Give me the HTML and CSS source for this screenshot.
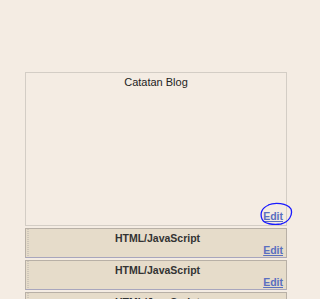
FILE: index.html
```html
<!DOCTYPE html>
<html lang="id">
<head>
  <meta charset="UTF-8" />
  <title>Tata Letak</title>
  <link rel="stylesheet" href="styles.css">
</head>
<body>

<div class="layout">
  <!-- Main posts area -->
  <div class="main-box">
    <div class="box-title">Catatan Blog</div>
    <div class="edit-wrap">
      <a href="#" class="edit-link">Edit</a>
      <svg class="circle-mark" width="34" height="24" viewBox="0 0 34 24">
        <path d="M9 3 C16 0 28 1 32 7 C34 13 30 20 22 22 C14 23 5 22 3 17 C1 12 2 6 10 3" fill="none" stroke="#1a1aff" stroke-width="1.3"/>
      </svg>
    </div>
  </div>

  <!-- Page elements -->
  <div class="widget">
    <div class="widget-title">HTML/JavaScript</div>
    <a href="#" class="edit-link">Edit</a>
  </div>
  <div class="widget">
    <div class="widget-title">HTML/JavaScript</div>
    <a href="#" class="edit-link">Edit</a>
  </div>
  <div class="widget">
    <div class="widget-title">HTML/JavaScript</div>
    <a href="#" class="edit-link">Edit</a>
  </div>
</div>

</body>
</html>
```

FILE: styles.css
```css
body {
  margin: 0;
  background-color: #f4ece3;
  font-family: "Liberation Sans", Arial, sans-serif;
  overflow: hidden;
}

.layout {
  padding: 72px 0 0 25px;
  width: 262px;
}

.main-box {
  height: 152px;
  border: 1px solid #d3cdc5;
  display: flex;
  flex-direction: column;
  justify-content: space-between;
}

.box-title {
  font-size: 11px;
  color: #222;
  text-align: center;
  padding-top: 3px;
}

.edit-wrap {
  position: relative;
  align-self: flex-end;
  margin: 0 3px 2px 0;
  line-height: 13px;
}

.edit-link {
  font-size: 10.5px;
  font-weight: bold;
  color: #5a6fc0;
  text-decoration: underline;
}

.circle-mark {
  position: absolute;
  left: -4px;
  top: -6px;
}

.widget {
  height: 27px;
  margin-top: 2px;
  background-color: #e6dcca;
  border: 1px solid #b8b0a6;
  border-bottom-color: #a8a6bd;
  display: flex;
  flex-direction: column;
  padding: 1px 3px 0 6px;
  background-image: repeating-linear-gradient(#cfc7bb 0 1px, transparent 1px 2px);
  background-size: 2px 100%;
  background-repeat: no-repeat;
  background-position: 1px 0;
}

.widget-title {
  font-size: 10.5px;
  font-weight: bold;
  color: #333;
  text-align: center;
  padding-top: 2px;
  line-height: 13px;
}

.widget .edit-link {
  align-self: flex-end;
  line-height: 12px;
  margin-top: -1px;
}
```
